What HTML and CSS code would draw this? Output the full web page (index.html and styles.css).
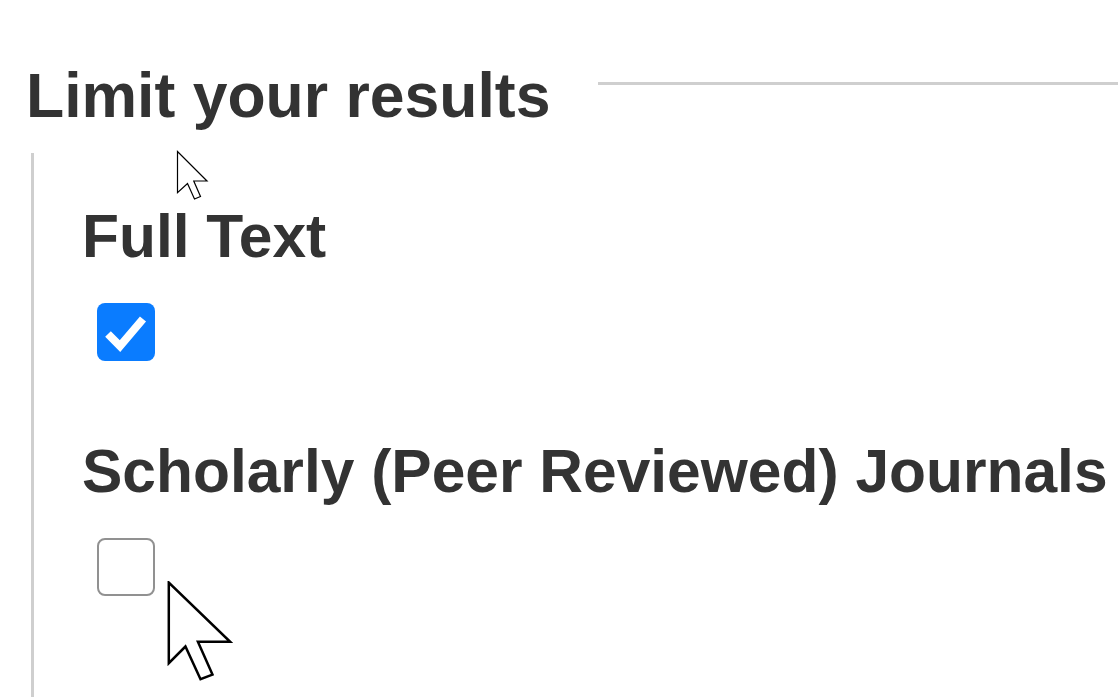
FILE: index.html
```html
<!DOCTYPE html>
<html lang="en">
<head>
<meta charset="utf-8">
<title>Limit your results</title>
<link rel="stylesheet" href="styles.css">
</head>
<body>
<div class="page">
  <div class="header">
    <h2 class="legend">Limit your results</h2>
    <div class="rule"></div>
  </div>
  <div class="section">
    <div class="group">
      <div class="label">Full Text</div>
      <span class="box checked">
        <svg viewBox="0 0 58 58" width="58" height="58"><path d="M11 31 L23 43 L46 16" fill="none" stroke="#fff" stroke-width="8" stroke-linecap="butt" stroke-linejoin="miter"/></svg>
      </span>
    </div>
    <div class="group second">
      <div class="label">Scholarly (Peer Reviewed) Journals</div>
      <span class="box"></span>
    </div>
  </div>
  <svg class="cursor cursor-small" viewBox="-1 -1 14 22" width="35" height="55"><path d="M0 0 L0 16.5 L4 12.8 L6.8 19 L9.2 18 L6.5 11.8 L11.8 11.8 Z" fill="#fff" stroke="#000" stroke-width="1.2" vector-effect="non-scaling-stroke"/></svg>
  <svg class="cursor cursor-big" viewBox="-0.3 -0.3 12.6 20" width="66" height="104"><path d="M0 0 L0 15.5 L3.2 12.3 L6.1 18.6 L8.4 17.7 L5.6 11.4 L11.8 11.4 Z" fill="#fff" stroke="#000" stroke-width="2.5" vector-effect="non-scaling-stroke"/></svg>
</div>
</body>
</html>
```

FILE: styles.css
```css
html, body {
  margin: 0;
  padding: 0;
  background: #fff;
}

.page {
  position: relative;
  width: 1118px;
  height: 697px;
  overflow: hidden;
  font-family: "Liberation Sans", Arial, sans-serif;
  color: #333;
}

.header {
  display: flex;
  align-items: flex-start;
  padding-top: 59px;
  padding-left: 26px;
}

.legend {
  margin: 0;
  font-size: 62.5px;
  line-height: 72px;
  font-weight: bold;
  white-space: nowrap;
}

.rule {
  flex: 1;
  height: 3px;
  margin-top: 23px;
  margin-left: 48px;
  background: #cfcfcf;
}

.section {
  margin-top: 22px;
  margin-left: 31px;
  border-left: 3px solid #cfcfcf;
  padding-left: 48px;
  padding-top: 48px;
  height: 600px;
}

.group {
  display: flex;
  flex-direction: column;
  align-items: flex-start;
}

.group.second {
  margin-top: 75px;
}

.label {
  font-size: 60.5px;
  line-height: 70px;
  font-weight: bold;
  white-space: nowrap;
}

.box {
  display: block;
  box-sizing: border-box;
  width: 58px;
  height: 58px;
  margin-top: 32px;
  margin-left: 15px;
  border-radius: 8px;
  border: 2px solid #919191;
  background: #fff;
}

.box.checked {
  border: none;
  background: #0a7cff;
}

.box svg {
  display: block;
}

.cursor {
  position: absolute;
  display: block;
}

.cursor-small {
  left: 175px;
  top: 149px;
}

.cursor-big {
  left: 167px;
  top: 581px;
}
```
